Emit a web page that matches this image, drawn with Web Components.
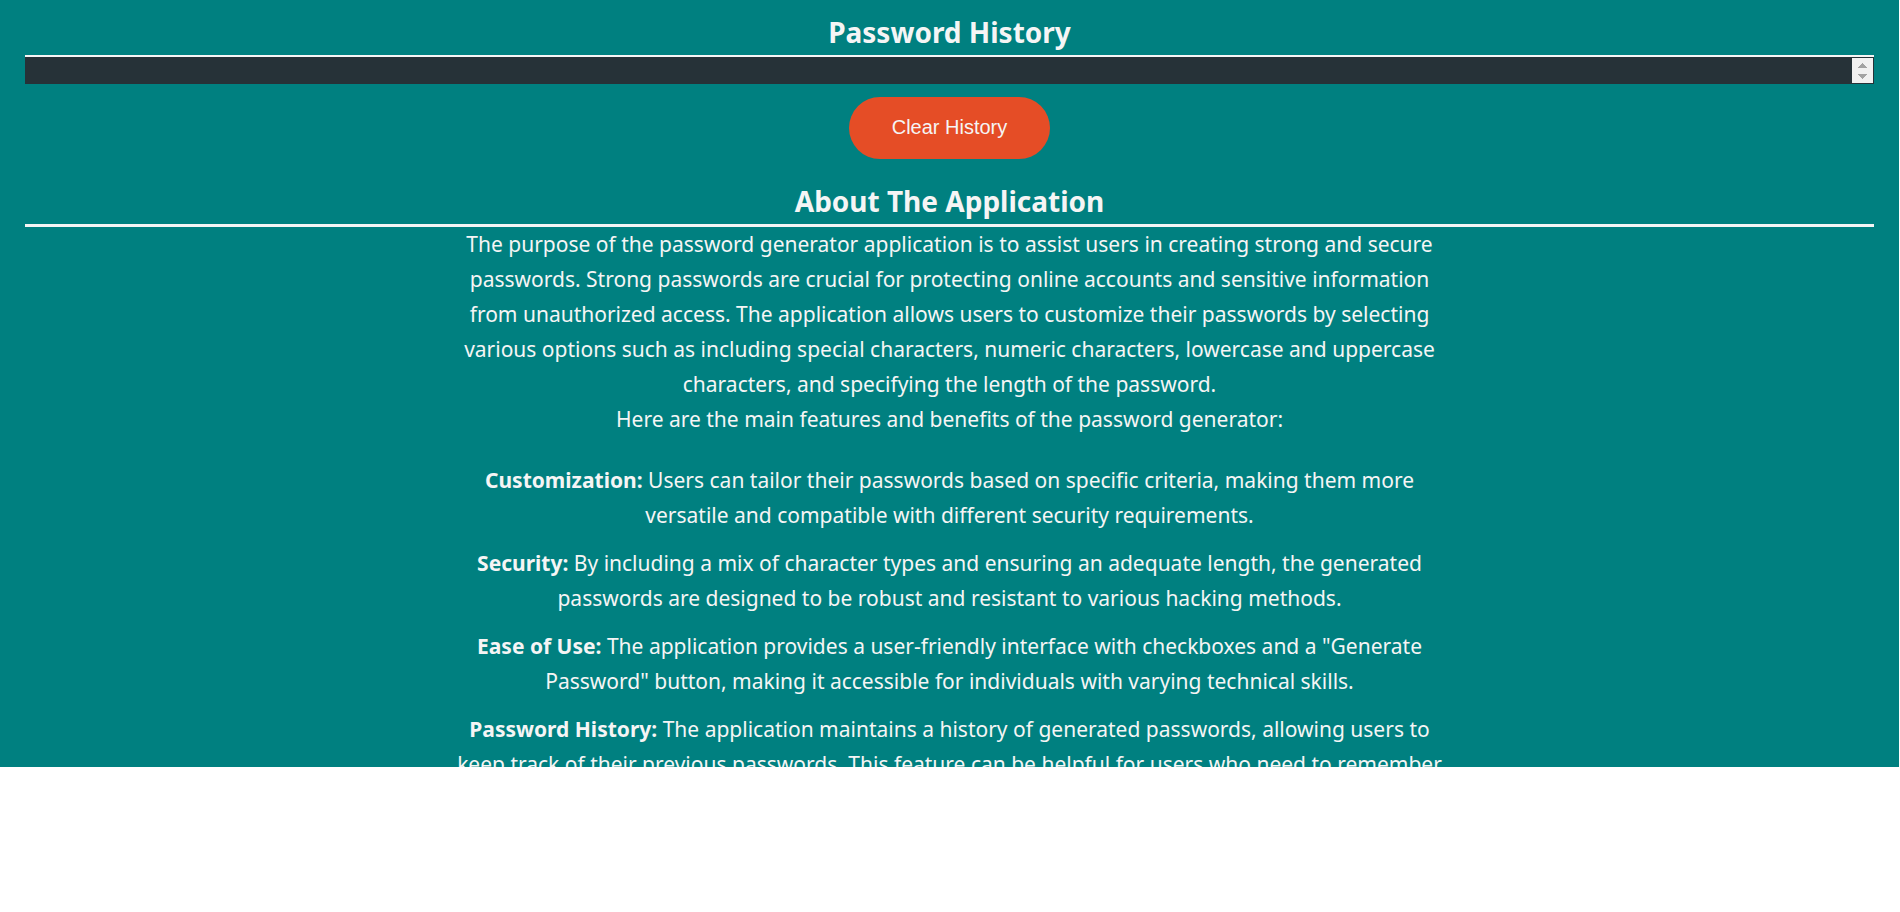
<!DOCTYPE html>
<html lang="en">
<head>
<meta charset="utf-8">
<meta name="viewport" content="width=device-width, initial-scale=1">
<title>Password Generator</title>
<style>
  body { margin: 0; background: #fff; color: #f5f5f5; font-family: "Trebuchet MS", "Noto Sans", sans-serif; }
</style>
</head>
<body>
<app-panel>
  <section-title>Password History</section-title>
  <history-box></history-box>
  <clear-button>Clear History</clear-button>
  <section-title style="--rule: 3px">About The Application</section-title>
  <about-text></about-text>
</app-panel>

<script>
  const define = (name, html) => {
    const template = document.createElement('template');
    template.innerHTML = html;
    customElements.define(name, class extends HTMLElement {
      constructor() {
        super();
        this.attachShadow({ mode: 'open' }).append(template.content.cloneNode(true));
      }
    });
  };

  define('app-panel', `
    <style>
      :host { display: block; box-sizing: border-box; height: calc(100vh - 145px); margin-right: 1px;
        padding: 12px 25px 0; overflow: hidden; background: #008080; }
      main { display: flex; flex-direction: column; }
    </style>
    <main><slot></slot></main>`);

  define('section-title', `
    <style>
      :host { display: block; }
      h2 { margin: 0; padding-bottom: 3px; border-bottom: var(--rule, 2px) solid #f5f5f5;
        font-size: 28px; line-height: 40px; font-weight: 700; text-align: center; }
    </style>
    <h2><slot></slot></h2>`);

  define('history-box', `
    <style>
      :host { display: flex; box-sizing: border-box; height: 27px; padding: 1px; background: #263238; }
      textarea { flex: 1; min-width: 0; margin: 0; padding: 0 8px; border: 0; outline: 0; resize: none;
        overflow: hidden; background: transparent; color: #f5f5f5; font: 18px/25px "Liberation Sans", Arial, sans-serif; }
      svg { flex: none; display: block; background: #f1f1f1; }
    </style>
    <textarea aria-label="Password history" readonly></textarea>
    <svg width="21" height="25" viewBox="0 0 21 25" fill="#a3a3a3" aria-hidden="true">
      <path d="M10 5h1v1h1v1h1v1h1v1h1v1H6V9h1V8h1V7h1V6h1z"/>
      <path d="M6 16h9v1h-1v1h-1v1h-1v1h-1v1h-1v-1H9v-1H8v-1H7v-1H6z"/>
    </svg>`);

  define('clear-button', `
    <style>
      :host { display: flex; justify-content: center; margin: 13px 0 22px; }
      button { height: 62px; padding: 0 43px 2px; border: 0; border-radius: 31px; background: #e54d26;
        color: #f5f5f5; font: 20px/24px "Liberation Sans", Arial, sans-serif; cursor: pointer; }
    </style>
    <button type="button"><slot></slot></button>`);

  define('feature-item', `
    <style>
      :host { display: block; }
      strong { font-weight: 700; }
    </style>
    <strong><slot name="name"></slot></strong> <slot></slot>`);

  define('about-text', `
    <style>
      :host { display: block; align-self: center; max-width: 996px; font-size: 21px; line-height: 35px; text-align: center; }
      p { margin: 0; }
      ul { display: flex; flex-direction: column; gap: 13px; margin: 26px 0 0; padding: 0; list-style: none; }
    </style>
    <p>The purpose of the password generator application is to assist users in creating strong and secure passwords. Strong passwords are crucial for protecting online accounts and sensitive information from unauthorized access. The application allows users to customize their passwords by selecting various options such as including special characters, numeric characters, lowercase and uppercase characters, and specifying the length of the password.</p>
    <p>Here are the main features and benefits of the password generator:</p>
    <ul>
      <li><feature-item><span slot="name">Customization:</span>Users can tailor their passwords based on specific criteria, making them more versatile and compatible with different security requirements.</feature-item></li>
      <li><feature-item><span slot="name">Security:</span>By including a mix of character types and ensuring an adequate length, the generated passwords are designed to be robust and resistant to various hacking methods.</feature-item></li>
      <li><feature-item><span slot="name">Ease of Use:</span>The application provides a user-friendly interface with checkboxes and a "Generate Password" button, making it accessible for individuals with varying technical skills.</feature-item></li>
      <li><feature-item><span slot="name">Password History:</span>The application maintains a history of generated passwords, allowing users to keep track of their previous passwords. This feature can be helpful for users who need to remember</feature-item></li>
    </ul>`);
</script>
</body>
</html>
